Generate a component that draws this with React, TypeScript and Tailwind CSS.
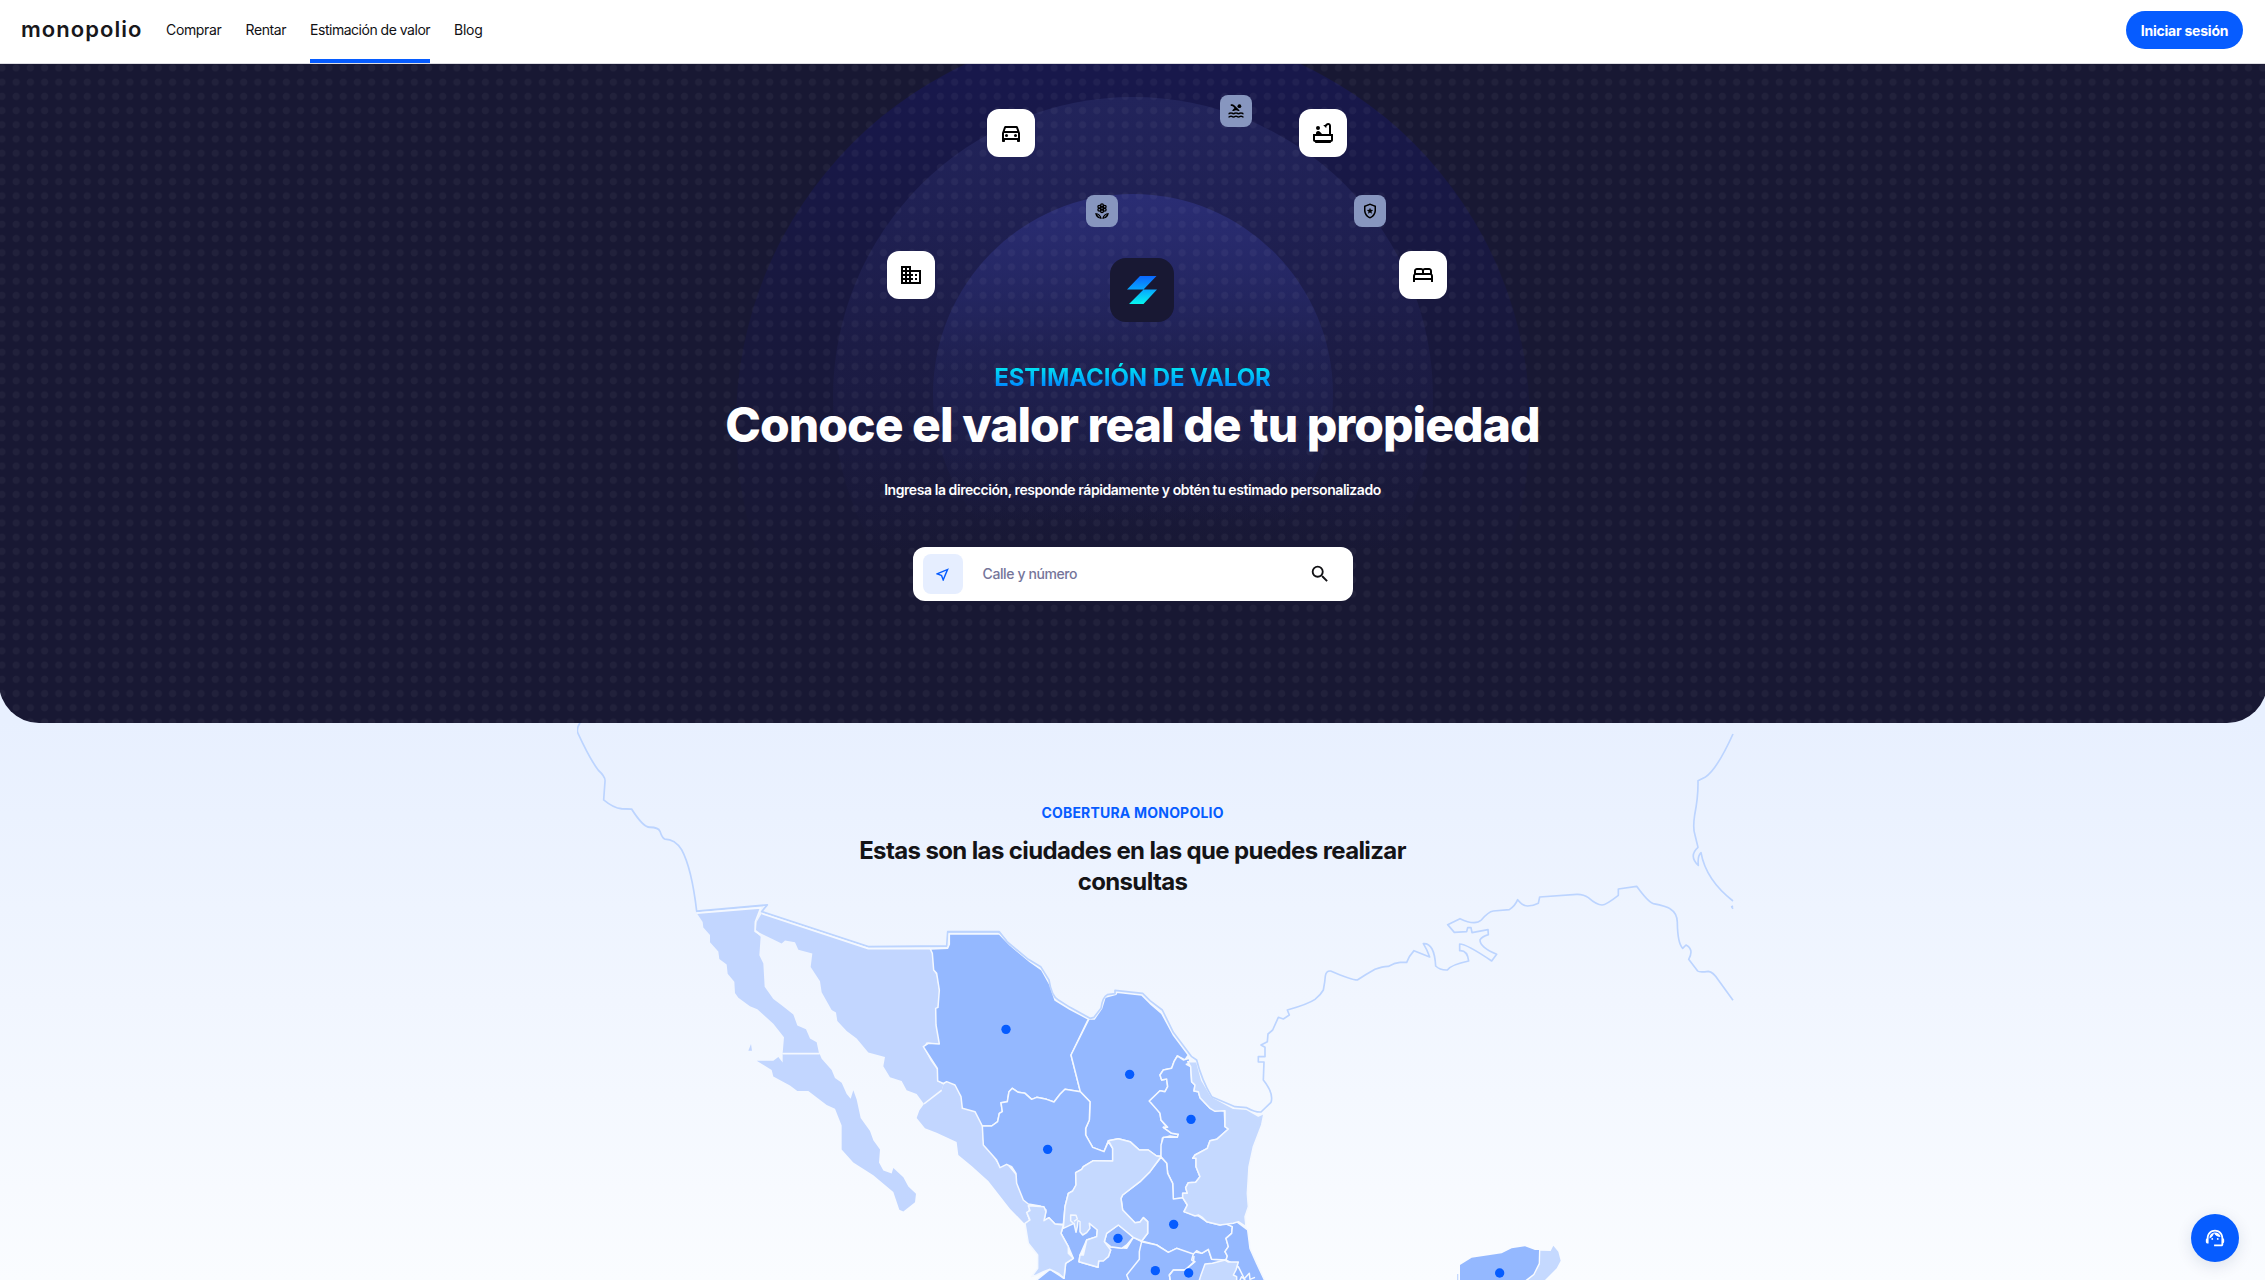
import type { ReactNode } from "react";
import {
  MdOutlineDirectionsCar, MdOutlineBathtub, MdDomain, MdOutlineBed, MdPool,
  MdOutlineNearMe, MdSearch, MdOutlineSupportAgent,
} from "react-icons/md";

const NAV = [
  { label: "Comprar", cls: "tracking-[-0.34px]" },
  { label: "Rentar", cls: "tracking-[-0.4px]" },
  { label: "Estimación de valor", cls: "tracking-[-0.49px]", active: true },
  { label: "Blog", cls: "tracking-[-0.3px]" },
];

function Header() {
  return (
    <header className="flex h-16 items-stretch border-b border-[#dddde2] bg-white px-[22px]">
      <div className="flex w-[144px] items-center pb-[5px]">
        <span className="-ml-px text-[22px] leading-6 font-semibold tracking-[1.05px] text-[#18181b]">monopolio</span>
      </div>
      <nav className="flex gap-6">
        {NAV.map((n) => (
          <a key={n.label} className={"flex items-center border-b-4 py-0.5 text-[14px] leading-5 text-[#111114] " + (n.active ? "border-[#065cff] " : "border-transparent ") + n.cls}>
            {n.label}
          </a>
        ))}
      </nav>
      <button className="mt-[11px] ml-auto h-[38px] w-[117px] rounded-full bg-[#065cff] text-[14px] font-bold tracking-[-0.23px] text-white">
        Iniciar sesión
      </button>
    </header>
  );
}

function Tile({ pos, small, children }: { pos: string; small?: boolean; children: ReactNode }) {
  return (
    <div className={"absolute flex items-center justify-center text-black " + (small ? "size-8 rounded-lg bg-[#8796bf] text-[18px] " : "size-12 rounded-xl bg-white text-[24px] ") + pos}>
      {children}
    </div>
  );
}

function Flower() {
  return (
    <svg viewBox="0 0 18 18" className="size-[18px]" fill="none" stroke="currentColor">
      <g strokeWidth="1.300">
        <circle cx="9" cy="6.200" r="1.300" />
        <circle cx="9" cy="3.200" r="1.400" /><circle cx="6.300" cy="4.700" r="1.400" /><circle cx="11.700" cy="4.700" r="1.400" />
        <circle cx="6.300" cy="7.800" r="1.400" /><circle cx="11.700" cy="7.800" r="1.400" /><circle cx="9" cy="9.300" r="1.400" />
      </g>
      <path d="M2.200 11c3.700.3 6 2.200 6.600 5.800C5 16.700 2.600 14.700 2.200 11zM15.800 11c-3.700.3-6 2.200-6.600 5.800 3.800-.1 6.200-2.100 6.600-5.800z" fill="currentColor" stroke="none" />
      <path d="M4.500 12.900l2.300 2.200M13.500 12.900l-2.300 2.200" stroke="#8796bf" strokeWidth="1" />
    </svg>
  );
}

function ShieldStar() {
  return (
    <svg viewBox="0 0 24 24" className="size-[18px]" fill="currentColor">
      <path d="M12 2 4 5v6.090c0 5.050 3.410 9.760 8 10.910 4.590-1.150 8-5.860 8-10.910V5l-8-3zm6 9.090c0 4-2.550 7.700-6 8.830-3.450-1.130-6-4.820-6-8.830v-4.700l6-2.250 6 2.250v4.700z" />
      <path d="M12 7.500l1.200 2.850 3.100.27-2.350 2.030.7 3.020L12 14.070l-2.650 1.600.7-3.020L7.700 10.620l3.100-.27z" />
    </svg>
  );
}

function Hero() {
  return (
    <section className="relative mx-[-1.5px] flex h-[659px] flex-col items-center overflow-hidden rounded-b-[40px] bg-[#181833]">
      <div className="absolute top-[-37px] left-1/2 size-[794px] -translate-x-1/2 rounded-full bg-linear-to-b from-[#18184b] from-8% via-[#18184a]/40 via-38% to-[#18184a]/0 to-70%" />
      <div className="absolute top-[33px] left-1/2 size-[600px] -translate-x-1/2 rounded-full bg-linear-to-b from-[#22245b] via-[#20204f]/50 via-42% to-[#20204f]/0 to-76%" />
      <div className="absolute top-[130px] left-1/2 size-[400px] -translate-x-1/2 rounded-full bg-linear-to-b from-[#2a2d74] via-[#23265f]/50 via-40% to-[#20205a]/0 to-82%" />
      <div className="absolute inset-0 bg-[radial-gradient(circle,rgba(255,255,255,0.038)_3.2px,transparent_4.1px)] bg-[size:14.225px_14.225px] bg-[position:-4.18px_-3.2px]" />
      <Tile pos="top-[45px] left-[988.900px]"><MdOutlineDirectionsCar /></Tile>
      <Tile pos="top-[45px] left-[1300.900px]"><MdOutlineBathtub /></Tile>
      <Tile pos="top-[187px] left-[888.900px]"><MdDomain /></Tile>
      <Tile pos="top-[187px] left-[1400.900px]"><MdOutlineBed /></Tile>
      <Tile small pos="top-[30.500px] left-[1221.900px]"><MdPool /></Tile>
      <Tile small pos="top-[131px] left-[1087.900px]"><Flower /></Tile>
      <Tile small pos="top-[131px] left-[1355.900px]"><ShieldStar /></Tile>
      <div className="relative mt-[194px] ml-[18px] flex size-16 items-center justify-center rounded-2xl bg-[#181833]">
        <svg viewBox="0 0 30 28" className="h-7 w-[30px]">
          <defs>
            <linearGradient id="bolt" x1="0" y1="0" x2="0" y2="28" gradientUnits="userSpaceOnUse">
              <stop stopColor="#0a66ff" /><stop offset=".5" stopColor="#07a8ff" /><stop offset="1" stopColor="#06f6ef" />
            </linearGradient>
          </defs>
          <path d="M13 0H29.500L16.500 13.500H0ZM16.500 13.500H30L16.500 28H2Z" fill="url(#bolt)" />
        </svg>
      </div>
      <p className="relative mt-10 bg-linear-to-b from-[#06e6f0] from-15% to-[#0a78ff] to-85% bg-clip-text text-[24px] leading-8 font-bold tracking-[-0.07px] text-transparent">ESTIMACIÓN DE VALOR</p>
      <h1 className="relative mt-[3px] text-[48px] leading-[56px] font-extrabold tracking-[-0.96px] text-white">Conoce el valor real de tu propiedad</h1>
      <p className="relative mt-[25px] text-[14px] leading-6 font-semibold tracking-[-0.43px] text-white">Ingresa la dirección, responde rápidamente y obtén tu estimado personalizado</p>
      <div className="relative mt-[45px] flex h-[54px] w-[440px] items-center rounded-xl bg-white pr-[22px] pl-2.5">
        <span className="flex size-10 items-center justify-center rounded-lg bg-[#e6eeff] text-[17px] text-[#065cff]"><MdOutlineNearMe /></span>
        <span className="ml-5 flex-1 pb-0.5 text-[14px] font-medium tracking-[-0.39px] text-[#75759a]">Calle y número</span>
        <MdSearch className="text-[22px] text-[#111114]" />
      </div>
    </section>
  );
}

/* Map shapes, drawn in local grids placed over the coverage section. */
const WEST_LIGHT = [
  "M410 576L602 562L588 600L585 625L602 640L598 690L610 712L614 775L640 808L665 825L700 850L712 880L738 890L750 915L770 925L777 955H668L672 912L640 875L592 836L570 828L535 805L525 792L523 762L503 740L500 715L478 700L475 680L450 655V635L430 615L428 600Z",
  "M668 957H779L785 970L815 1000L825 1022L845 1035L860 1065L872 1078L880 1055L890 1080L902 1130L930 1165L940 1190L960 1215L957 1250L970 1272L995 1280L1000 1265L1030 1290L1045 1315L1068 1335L1065 1358L1030 1383L1018 1378L1000 1330L940 1285L880 1250L845 1215V1150L825 1105L800 1095L745 1057H712L690 1042L640 1018L635 1000L590 975H640L655 965L668 980Z",
  "M605 577L925 672H1110L1117 685L1120 730L1130 745L1138 790L1133 832L1126 840L1133 890L1138 930L1100 925L1090 938L1112 975L1132 1000L1133 1030L1150 1040L1145 1055L1092 1092L1070 1065L1040 1055L1025 1030L990 1020L970 990L975 965L925 953L890 915L860 895L832 868L828 845L815 838L785 790L780 760L752 722L757 685L715 675L705 655L675 650L665 658L600 630L588 622L590 600Z",
  "M1092 1092L1145 1055L1150 1040L1165 1030L1188 1042L1205 1075L1207 1102L1245 1110L1267 1150L1268 1190L1300 1235L1320 1264L1340 1255L1368 1285L1375 1320L1395 1355L1412 1365L1400 1390L1408 1410L1393 1415L1350 1375L1285 1300L1235 1260L1195 1230L1190 1195L1130 1170L1095 1158L1070 1130L1078 1110Z",
  "M565 948L573 930L576 948Z",
];
const MID = [
  "M410 1140L450 1108L492 1135L497 1090L520 1075L505 1040L483 1000L488 985L515 955L580 960L592 990L590 1010L560 1020L540 1065L537 1085L594 1102L596 1083L625 1070L632 1050L618 1040L680 1045L700 1012L725 1025L805 1057L830 1045L905 1060L925 1048L935 1078L978 1080L1098 1150H405Z",
  "M91 147L143 145L148 133V102H298L330 135L390 185L425 210L450 255L465 300L510 328L565 357L513 465L541 575L495 568L480 583L462 606L440 598L410 592L395 598L375 580L355 577L337 565L327 575L322 605L303 608L307 635L298 640L293 665L275 678H247L225 635L187 625L183 590L165 555L140 545L130 550L113 543L112 505L70 440L85 430L118 432L108 375L107 325L114 322L118 270L110 220L101 210L97 160Z",
  "M567 357L583 357L605 325L615 292L648 283L650 277L725 285L750 310L785 340L820 405L865 465L855 480L832 468L822 485L815 505L790 510L780 525L785 540L800 537L803 560L795 575L780 572L748 603L770 625L780 640L783 660L803 685L790 682L815 700L835 703L832 712L810 708L787 715L783 768L770 768L745 750L718 750L690 725L655 716L625 722L612 755L578 742L557 705V685L568 660L570 605L541 575L513 465Z",
  "M832 468L850 480L868 475L870 490L859 493L872 500L875 545L885 555L882 573L895 575L900 593L930 625L973 632L975 680L985 687L950 718L930 722L922 745L885 765L878 775L888 775V800L900 830L887 847L865 848L857 863L862 880L848 880V895L820 897L818 850L803 820L800 790L783 770V735L790 712L832 712L835 703L815 700L790 682H803L783 660L780 640L748 603L780 572L795 575L803 560L800 537L785 540L780 525L790 510L815 505L822 485Z",
  "M337 565L355 577L375 580L395 598L410 592L440 598L462 606L480 583L495 568L541 575L570 605L568 660L557 685V705L578 742L612 755L625 725L638 745V783L580 782L550 800L545 808L527 818L528 855L518 873L505 880L495 920L490 973L465 972L447 953L432 962L438 930L420 918L385 912L370 900L350 850L348 820L335 800L320 793L300 803L290 780L250 735L247 678H275L293 665L298 640L307 635L303 608L322 605L327 575Z",
  "M783 772L800 790L803 820L818 850L820 897L848 893L862 915L852 935L895 948L920 965L960 975L975 970L997 980L995 1000L978 1015L985 1040L975 1055L982 1068L978 1080L935 1078L925 1048L905 1060L890 1052L880 1062L870 1062L830 1045L805 1057L770 1035L725 1023L743 1000V965L730 953L720 966L705 968L668 930L663 895L668 885L720 845L750 815Z",
  "M975 970L1010 965L1037 985L1043 990L1050 1045L1070 1090L1098 1150H1040L1015 1100L978 1080L982 1068L975 1055L985 1040L978 1015L995 1000L997 980Z",
  "M632 1040L613 1025L620 1000L655 975L680 993L700 1012L680 1035L665 1045Z",
  "M725 1025L770 1035L805 1057L830 1045L880 1062L875 1080L885 1085L855 1110H820L808 1125L812 1150H690L680 1125L718 1078V1055Z",
];
const LIGHT = [
  "M863 485L890 485L905 540L935 590L1000 625L1040 628L1075 648L1092 640L1085 675L1060 740L1047 800L1042 880L1045 920L1035 950L1038 980L1015 965L1000 970L960 975L920 965L908 953L895 945L885 948L852 935L862 915L848 893V880H862L857 863L865 848L887 847L900 830L888 800V775H878L885 765L922 745L930 722L950 718L985 687L975 680V632L945 634L930 625L900 593L895 575L882 573L885 555L875 545L872 500Z",
  "M625 722L655 716L690 725L718 750H745L770 768L783 770L750 815L720 845L668 885L663 895L668 930L705 968L720 966L730 953L743 965V1000L725 1023L700 1012L655 975L620 1000L613 1025L632 1050L625 1070L610 1083H596L594 1102L537 1085L540 1065L550 1065L560 1020L590 1010L592 990L568 970L570 985L560 998L548 1005L540 995V965L534 962L532 980L528 997L522 970L490 985L495 920L505 880L518 873L528 855L527 818L545 808L550 800L580 782L638 783V745Z",
  "M385 917L432 920L438 935L432 962L447 953L465 972L490 975L483 1000L505 1040L505 1060L520 1075L497 1090L492 1135L475 1120L450 1108L430 1115L410 1125L395 1130L413 1105V1065L385 1030L375 970L390 960L380 937L390 932Z",
  "M915 1092L937 1090L975 1080L985 1086H1015L1008 1110L1000 1125L1010 1130V1150H895L903 1125Z",
];
const BORDERS = "M520 970L512 962V945L528 946L532 957L522 964M1015 1150L1025 1130L1032 1137L1048 1120L1050 1138L1065 1132M812 1150L808 1125L820 1110H855L880 1088L882 1068";
const COAST_WEST = "M60 62Q48 78 54 90Q90 160 115 190Q137 208 135 220L131 270Q160 292 185 294L215 295Q250 345 270 344Q295 344 300 355Q307 375 315 376Q345 376 365 405Q395 455 410 571L622 554L605 572L925 667L1160 665L1163 627H1315L1340 652";
const COAST_MID = "M142 95H298L322 126L385 178L422 200L447 240Q455 290 475 300L510 322L570 355L582 352L603 325Q608 290 622 284L645 281V271L728 280L750 302L787 330L820 397L875 470L890 480Q905 540 935 590L1005 620L1040 623Q1065 637 1083 636L1113 607Q1122 580 1090 540L1092 486H1075V470H1095V442L1083 435L1102 425L1104 402L1118 390L1135 352L1150 357L1168 345L1162 330Q1225 312 1245 298Q1262 285 1270 270Q1275 245 1276 228Q1278 212 1292 213Q1355 240 1372 240Q1400 222 1425 208Q1450 198 1466 199L1482 191L1500 187";
const COAST_EAST = "M0 787H20Q28 767 42 752L89 771Q82 750 70 731Q103 728 107 798Q120 811 142 810Q153 794 206 783Q202 750 179 752V732Q200 732 275 783L290 763Q240 742 240 720Q245 710 265 704L264 689L216 698L213 683H203L200 695L163 697L143 674L180 656Q225 678 244 660Q265 635 280 633L328 629Q345 618 353 599Q368 618 383 618Q400 618 415 610L419 591L530 583Q550 582 565 593Q590 615 606 615Q618 615 655 586V567L710 559Q745 607 760 611Q800 619 810 626Q833 640 832 670Q833 730 848 745L858 735Q883 748 866 778L893 813Q898 818 925 814Q940 816 955 840L999 901M999 102Q950 210 915 232L894 242Q895 290 884 345Q878 385 885 405L894 442Q865 468 895 496Q892 468 903 458Q918 540 999 603M999 618L995 620L999 626";
const DOTS = [[318, 388], [689, 523], [873, 658], [443, 748], [821, 973], [654, 1015], [766, 1112], [866, 1119]];

function CoverageMap() {
  return (
    <svg viewBox="577 723 1157 557" className="absolute top-0 left-[577px] h-[557px] w-[1157px]" fill="none" strokeLinejoin="round">
      <g transform="translate(560 700) scale(.33333 .36991)">
        {WEST_LIGHT.map((d) => <path key={d} d={d} fill="#c2d6ff" />)}
        <path d={COAST_WEST} stroke="#bcd4ff" strokeWidth="5" />
        <path d="M410 576L602 562L586 600L585 625L600 634M605 577L925 672H1110M668 956H779M1092 1092L1145 1055" stroke="#f4f8ff" strokeWidth="4.500" />
      </g>
      <g transform="translate(900 900) scale(.33333)" stroke="#f4f8ff" strokeWidth="4.500">
        {MID.map((d) => <path key={d} d={d} fill="#94b8ff" />)}
        {LIGHT.map((d) => <path key={d} d={d} fill="#c5d9ff" />)}
        <path d={BORDERS} />
        <path d={COAST_MID} stroke="#bcd4ff" strokeWidth="5" />
        {DOTS.map(([x, y]) => <circle key={x} cx={x} cy={y} r="14" fill="#065cff" stroke="none" />)}
      </g>
      <g transform="translate(1400 700) scale(.33333)">
        <path d={COAST_EAST} stroke="#bcd4ff" strokeWidth="5" />
      </g>
      <g transform="translate(1400 1200) scale(.33333)">
        <path d="M180 250V195L215 173L305 160L335 145L375 139L405 150H417L416 190L400 222L370 245Z" fill="#94b8ff" />
        <path d="M421 152L452 153L460 137L475 155L482 182L470 205L430 245H378L403 225L420 192Z" fill="#c5d9ff" />
        <path d="M173 222V245" stroke="#c5d9ff" strokeWidth="4" />
        <circle cx="299" cy="219" r="14" fill="#065cff" />
      </g>
    </svg>
  );
}

export default function App() {
  return (
    <div className="h-[1280px] overflow-hidden bg-white font-[Inter,sans-serif]">
      <Header />
      <div className="bg-linear-to-b from-[#e8f0ff] from-54% to-[#fafcff]">
        <Hero />
        <section className="relative h-[557px]">
          <CoverageMap />
          <div className="relative mx-auto flex w-[600px] flex-col items-center pt-20 text-center">
            <p className="text-[14px] leading-5 font-bold tracking-[0.2px] text-[#065cff]">COBERTURA MONOPOLIO</p>
            <h2 className="mt-3 text-[24px] leading-[31px] font-bold tracking-[-0.62px] text-[#141417]">Estas son las ciudades en las que puedes realizar<br />consultas</h2>
          </div>
        </section>
      </div>
      <button className="fixed right-[26px] bottom-[18px] flex size-12 items-center justify-center rounded-full bg-[#065cff] text-[22px] text-white shadow-[0_4px_16px_rgba(20,40,90,0.12)]">
        <MdOutlineSupportAgent />
      </button>
    </div>
  );
}
